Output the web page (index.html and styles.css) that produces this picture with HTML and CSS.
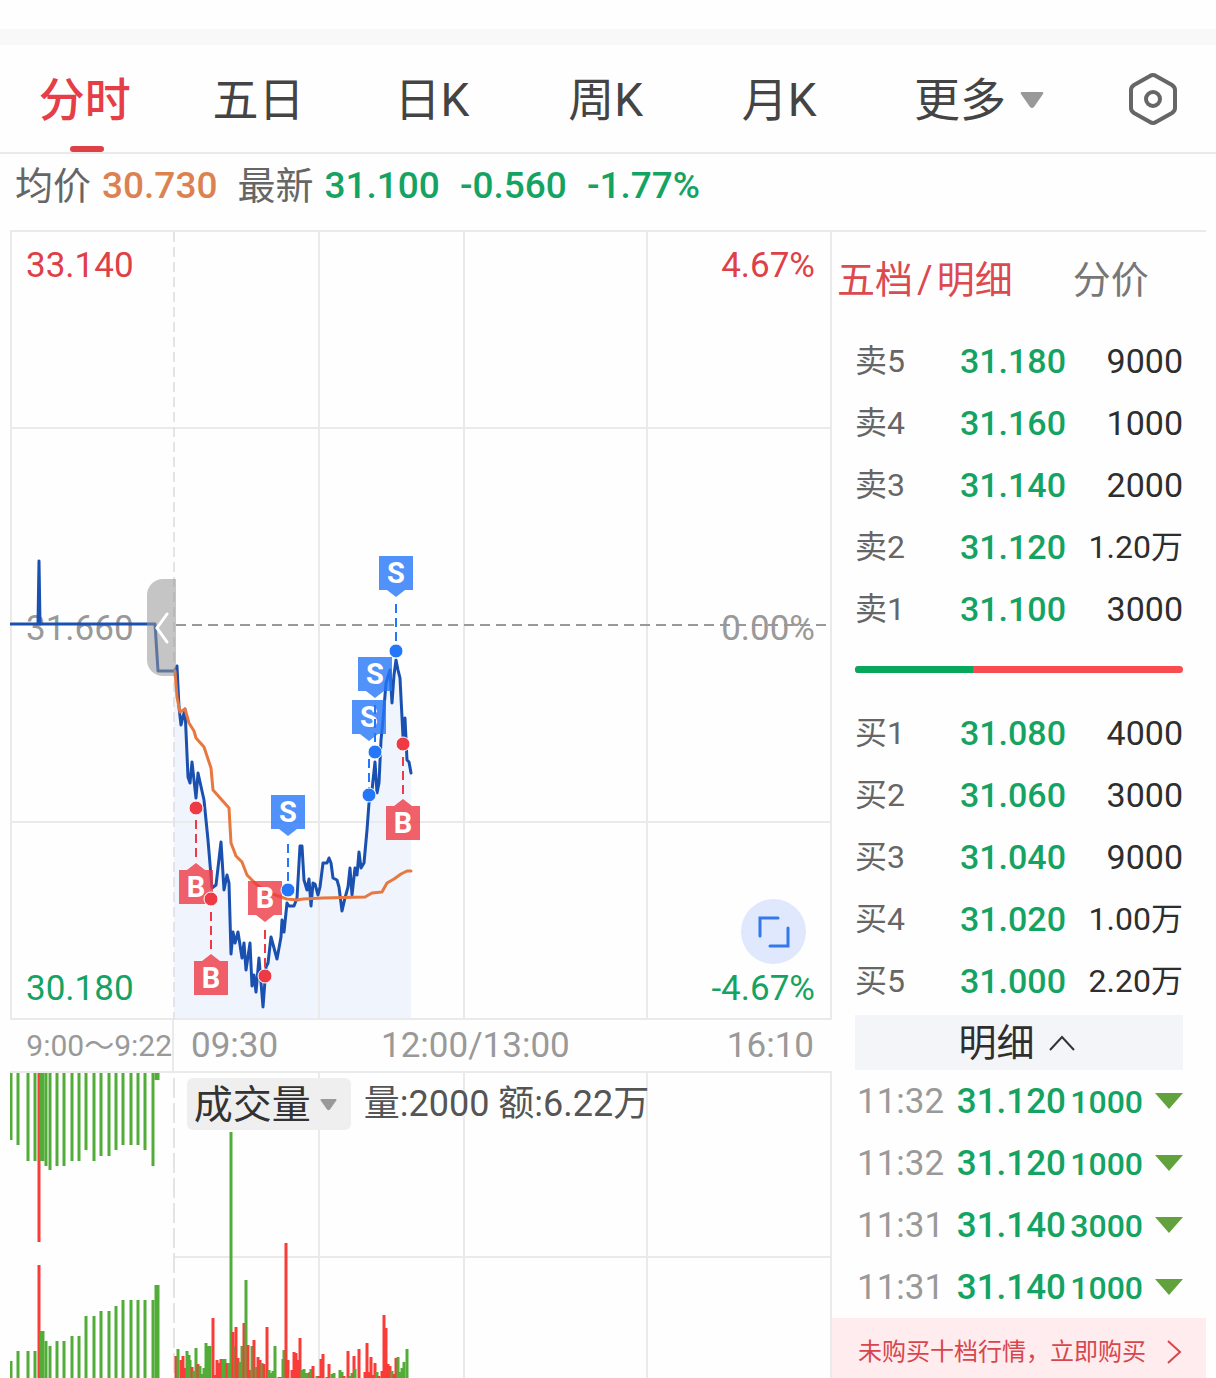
FILE: index.html
```html
<!DOCTYPE html>
<html lang="zh-CN">
	<head>
		<meta charset="UTF-8" />
		<meta name="viewport" content="width=device-width, initial-scale=1" />

		<title>分时</title>

		<link rel="stylesheet" href="styles.css">
	</head>
	<body>

		<nav class="tabs">
			<button class="tab active" type="button">分时</button>
			<button class="tab" type="button">五日</button>
			<button class="tab" type="button">日K</button>
			<button class="tab" type="button">周K</button>
			<button class="tab" type="button">月K</button>
			<button class="tab more" type="button">更多
				<svg class="caret" viewBox="0 0 24 16"><path d="M2 0H22Q24 0 23 2L14 15Q12 17 10 15L1 2Q0 0 2 0Z" /></svg>
			</button>
			<button class="tab settings" type="button" aria-label="设置">
				<svg class="gear" viewBox="0 0 50 54">
					<path d="M22 4Q25 2 28 4L44 13Q47 15 47 18V36Q47 39 44 41L28 50Q25 52 22 50L6 41Q3 39 3 36V18Q3 15 6 13Z" />
					<circle cx="25" cy="27" r="7" />
				</svg>
			</button>
		</nav>

		<p class="quote">
			<span class="name">均价</span><span class="avg">30.730</span>
			<span class="name last">最新</span><span class="down">31.100</span>
			<span class="down change">-0.560</span>
			<span class="down change">-1.77%</span>
		</p>

		<main class="main">

			<section class="charts">

				<div class="price">
					<span class="label top left up">33.140</span>
					<span class="label top right up">4.67%</span>
					<span class="label middle left">31.660</span>
					<span class="label middle right">0.00%</span>
					<span class="label bottom left down">30.180</span>
					<span class="label bottom right down">-4.67%</span>

					<svg class="plot" viewBox="10 230 822 790">
						<defs>
							<g id="sell">
								<path class="tag" d="M-17 -40H17V-6H9L0 1L-9 -6H-17Z" />
								<text class="letter" y="-13">S</text>
							</g>
							<g id="buy">
								<path class="tag" d="M-17 40H17V6H9L0 -1L-9 6H-17Z" />
								<text class="letter" y="33">B</text>
							</g>
							<g id="buy-above">
								<path class="tag" d="M-17 -40H17V-6H9L0 1L-9 -6H-17Z" />
								<text class="letter" y="-13">B</text>
							</g>
						</defs>

						<path class="area" d="M174 1018V671L177 666L179 707L181 725L185 709L188 777L190 783L192 762L196 798L198 773L204 800L208 840L212 888L216 885L221 842L224 890L227 875L229 883L231 954L233 932L235 943L238 932L242 958L244 943L246 970L250 943L252 986L254 975L256 992L259 958L263 1007L266 967L268 963L271 937L277 959L281 937L282 920L284 932L287 903L289 906L294 906L297 898L300 846L302 846L304 880L307 890L309 879L311 906L313 883L315 884L318 895L320 887L323 863L327 863L329 858L331 863L333 878L337 880L339 887L342 911L345 898L348 887L350 868L352 895L355 868L357 875L359 852L361 868L364 863L367 830L369 803L372 790L375 762L377 793L379 783L381 740L383 720L386 683L390 670L392 703L394 675L396 660L398 670L400 678L403 737L405 718L407 760L409 762L411 773V1018Z" />

						<path class="grid" d="M10 231H832M10 428H831M10 822H831M10 1019H832M11 231V1019M319 231V1019M464 231V1019M647 231V1019M831 231V1019" />
						<path class="grid dashed" d="M174 232V1020" />
						<path class="zero" d="M176 625H830" />

						<path class="line" d="M11 624H38L39 561L40 624H155L158 671H175L177 666L179 707L181 725L185 709L188 777L190 783L192 762L196 798L198 773L204 800L208 840L212 888L216 885L221 842L224 890L227 875L229 883L231 954L233 932L235 943L238 932L242 958L244 943L246 970L250 943L252 986L254 975L256 992L259 958L263 1007L266 967L268 963L271 937L277 959L281 937L282 920L284 932L287 903L289 906L294 906L297 898L300 846L302 846L304 880L307 890L309 879L311 906L313 883L315 884L318 895L320 887L323 863L327 863L329 858L331 863L333 878L337 880L339 887L342 911L345 898L348 887L350 868L352 895L355 868L357 875L359 852L361 868L364 863L367 830L369 803L372 790L375 762L377 793L379 783L381 740L383 720L386 683L390 670L392 703L394 675L396 660L398 670L400 678L403 737L405 718L407 760L409 762L411 773" />
						<path class="line average" d="M175 671L177 697L180 712L185 709L189 723L194 731L196 738L204 747L211 768L213 790L229 808L231 843L236 856L242 862L247 875L257 885L270 893L287 899L297 900L303 899L323 898L365 897L372 893L382 892L387 883L394 879L401 874L407 871L411 871" />

						<g class="marks buys">
							<path class="stem" d="M196 820V857M211 912V949M265 930V970M403 757V794" />
							<use href="#buy" x="196" y="864" />
							<use href="#buy" x="211" y="955" />
							<use href="#buy-above" x="265" y="921" />
							<use href="#buy" x="403" y="800" />
							<circle cx="196" cy="808" r="7" />
							<circle cx="211" cy="899" r="7" />
							<circle cx="265" cy="976" r="7" />
							<circle cx="403" cy="744" r="7" />
						</g>
						<g class="marks sells">
							<use href="#sell" x="288" y="835" />
							<use href="#sell" x="375" y="697" />
							<use href="#sell" x="369" y="740" />
							<use href="#sell" x="396" y="596" />
							<path class="stem" d="M288 844V884M369 759V790M375 705V746M396 604V646" />
							<circle cx="288" cy="890" r="7" />
							<circle cx="369" cy="795" r="7" />
							<circle cx="375" cy="752" r="7" />
							<circle cx="396" cy="651" r="7" />
						</g>
					</svg>

					<button class="handle" type="button" aria-label="收起盘前">
						<svg viewBox="0 0 14 32"><path d="M12 2L2 16L12 30" /></svg>
					</button>
					<button class="expand" type="button" aria-label="全屏">
						<svg viewBox="0 0 32 32"><path d="M2 20V2H20M30 12V30H12" /></svg>
					</button>
				</div>

				<div class="axis">
					<span class="pre">9:00～9:22</span>
					<span class="open">09:30</span>
					<span class="rest"><span>12:00/13:00</span><span>16:10</span></span>
				</div>

				<div class="volume">
					<svg class="plot" viewBox="10 1071 822 307">
						<path class="grid" d="M10 1072H832M174 1257H831M319 1072V1378M464 1072V1378M647 1072V1378M831 1072V1378" />
						<path class="grid dashed" d="M174 1078V1378" />
						<g id="bars"></g>
					</svg>
					<div class="legend">
						<button class="picker" type="button">成交量
							<svg class="caret" viewBox="0 0 24 16"><path d="M2 0H22Q24 0 23 2L14 15Q12 17 10 15L1 2Q0 0 2 0Z" /></svg>
						</button>
						<span>量:2000 额:6.22万</span>
					</div>
				</div>

			</section>

			<aside class="side">

				<div class="side-tabs">
					<button class="side-tab active" type="button">五档<i>/</i>明细</button>
					<button class="side-tab" type="button">分价</button>
				</div>

				<table class="book">
					<tr><th>卖5</th><td class="down">31.180</td><td>9000</td></tr>
					<tr><th>卖4</th><td class="down">31.160</td><td>1000</td></tr>
					<tr><th>卖3</th><td class="down">31.140</td><td>2000</td></tr>
					<tr><th>卖2</th><td class="down">31.120</td><td class="wan">1.20万</td></tr>
					<tr><th>卖1</th><td class="down">31.100</td><td>3000</td></tr>
				</table>

				<div class="ratio"><div class="ratio-bar"><div class="ratio-fill" style="width: 36%"></div></div></div>

				<table class="book">
					<tr><th>买1</th><td class="down">31.080</td><td>4000</td></tr>
					<tr><th>买2</th><td class="down">31.060</td><td>3000</td></tr>
					<tr><th>买3</th><td class="down">31.040</td><td>9000</td></tr>
					<tr><th>买4</th><td class="down">31.020</td><td class="wan">1.00万</td></tr>
					<tr><th>买5</th><td class="down">31.000</td><td class="wan">2.20万</td></tr>
				</table>

				<button class="detail" type="button">明细
					<svg viewBox="0 0 26 16"><path d="M1 15L13 2L25 15" /></svg>
				</button>

				<table class="trades">
					<tr><td>11:32</td><td>31.120</td><td>1000</td><td><svg viewBox="0 0 28 16"><path d="M0 0H28L14 16Z" /></svg></td></tr>
					<tr><td>11:32</td><td>31.120</td><td>1000</td><td><svg viewBox="0 0 28 16"><path d="M0 0H28L14 16Z" /></svg></td></tr>
					<tr><td>11:31</td><td>31.140</td><td>3000</td><td><svg viewBox="0 0 28 16"><path d="M0 0H28L14 16Z" /></svg></td></tr>
					<tr><td>11:31</td><td>31.140</td><td>1000</td><td><svg viewBox="0 0 28 16"><path d="M0 0H28L14 16Z" /></svg></td></tr>
				</table>

				<a class="banner" href="#">未购买十档行情，立即购买
					<svg viewBox="0 0 16 26"><path d="M2 2L14 13L2 24" /></svg>
				</a>

			</aside>

		</main>

		<script src="volume.js" type="text/javascript"></script>
	</body>
</html>
```
FILE: styles.css
```css
body {
	background: #FEFEFE;
	border-top: 16px solid #F8F8F8;
	color: #2E2E2E;
	font: 35px/40px Roboto, "Noto Sans CJK SC", sans-serif;
	margin: 29px 0 0;
}

html {
	background: #FEFEFE;
}

button {
	background: none;
	border: 0;
	color: inherit;
	font: inherit;
	margin: 0;
	padding: 0;
}

i {
	font-style: normal;
	margin: 0 4px;
}

svg {
	display: block;
	fill: none;
}

.up {
	color: #DF4048;
}

.down {
	color: #14A362;
}

.quote .down,
.book .down {
	font-weight: 500;
}

/* period tabs */

.tabs {
	border-bottom: 2px solid #EAEAEA;
	display: grid;
	grid-template-columns: repeat(5, 1fr) 222px 126px;
	height: 107px;
}

.tab {
	align-items: center;
	color: #444;
	display: flex;
	font-size: 46px;
	justify-content: center;
	padding: 3px 4px 0 0;
	position: relative;
}

.tab.active {
	color: #E63E46;
	font-weight: 500;
}

.tab.active::after {
	background: #DE4048;
	border-radius: 3px;
	bottom: 0;
	content: "";
	height: 6px;
	left: 50%;
	margin-left: -17px;
	position: absolute;
	width: 34px;
}

.tab.more {
	gap: 14px;
	padding-right: 0;
}

.tab.settings {
	padding: 0;
}

.caret {
	fill: #999;
	width: 24px;
}

.gear {
	stroke: #666;
	stroke-width: 4;
	width: 50px;
}

/* quote line */

.quote {
	display: flex;
	font-size: 37px;
	height: 76px;
	line-height: 64px;
	margin: 0;
	padding-left: 15px;
}

.name {
	color: #666;
	font-size: 38px;
	margin-right: 11px;
}

.last,
.change {
	margin-left: 20px;
}

.avg {
	color: #DB8250;
	font-weight: 500;
}

/* charts */

.main {
	display: grid;
	grid-template-columns: minmax(0, 822fr) minmax(0, 374fr);
	margin: 0 10px;
}

.price,
.volume {
	position: relative;
}

.plot {
	height: auto;
	position: relative;
	width: 100%;
}

.label {
	position: absolute;
}

.top {
	top: 16px;
}

.middle {
	color: #999;
	margin-top: -16px;
	top: 50%;
}

.bottom {
	bottom: 11px;
}

.left {
	left: 16px;
}

.right {
	right: 17px;
}

.grid {
	stroke: #EAEAEA;
	stroke-width: 2;
}

.dashed {
	stroke: #E2E4E8;
	stroke-dasharray: 20 5;
}

.price .dashed {
	stroke-dasharray: 10 5;
}

.zero {
	stroke: #999;
	stroke-dasharray: 10 6;
	stroke-width: 2;
}

.area {
	fill: #EFF4FD;
}

.line {
	stroke: #1A50B0;
	stroke-linecap: round;
	stroke-linejoin: round;
	stroke-width: 3;
}

.average {
	stroke: #E8783F;
}

.marks {
	fill: #EE3A45;
	stroke: #EE3A45;
}

.sells {
	fill: #2477F8;
	stroke: #2477F8;
}

.marks circle {
	stroke: #FFF;
	stroke-width: 1;
}

.stem {
	stroke-dasharray: 9 5;
	stroke-width: 2;
}

.tag {
	opacity: .8;
	stroke: none;
}

.letter {
	fill: #FFF;
	font-size: 29px;
	font-weight: 700;
	stroke: none;
	text-anchor: middle;
}

.handle {
	align-items: center;
	background: rgba(150, 150, 150, .55);
	border-radius: 16px 0 0 16px;
	display: flex;
	height: 97px;
	justify-content: center;
	margin-top: -46px;
	position: absolute;
	left: 137px;
	top: 50%;
	width: 29px;
}

.handle svg {
	stroke: #FFF;
	stroke-linecap: round;
	stroke-width: 3;
	width: 14px;
}

.expand {
	align-items: center;
	background: #DFE8FC;
	border-radius: 50%;
	bottom: 56px;
	display: flex;
	height: 65px;
	justify-content: center;
	position: absolute;
	right: 26px;
	width: 65px;
}

.expand svg {
	stroke: #3478EA;
	stroke-linecap: round;
	stroke-width: 3;
	width: 32px;
}

.axis {
	color: #999;
	display: grid;
	grid-template-columns: 164fr 207fr 451fr;
	line-height: 51px;
}

.pre {
	border-right: 2px solid #EAEAEA;
	font-size: 30px;
	text-align: right;
}

.open {
	padding-left: 17px;
}

.rest {
	display: flex;
	justify-content: space-between;
	padding-right: 18px;
}

.legend {
	align-items: center;
	color: #555;
	display: flex;
	font-size: 36px;
	gap: 13px;
	left: 21.5%;
	position: absolute;
	top: 7px;
}

.picker {
	align-items: center;
	background: #EFEFEF;
	border-radius: 6px;
	color: #333;
	display: flex;
	font-size: 39px;
	gap: 9px;
	height: 52px;
	padding: 2px 14px 0 7px;
}

.picker .caret {
	width: 17px;
}

.bar {
	stroke: #FA3C38;
	stroke-width: 3;
}

.bar.sell {
	stroke: #52AC38;
}

/* order book */

.side {
	border-top: 2px solid #EAEAEA;
	padding: 0 23px;
}

.side-tabs {
	display: flex;
	gap: 60px;
	height: 97px;
	margin-left: -18px;
}

.side-tab {
	color: #777;
	font-size: 38px;
	height: 96px;
	white-space: nowrap;
}

.side-tab.active {
	color: #DC4A50;
}

table {
	border-collapse: collapse;
	table-layout: fixed;
	width: 100%;
}

td,
th {
	box-sizing: border-box;
	height: 62px;
	padding: 2px 0 0;
	text-align: right;
	white-space: nowrap;
}

.book td {
	font-size: 34px;
}

.book th {
	color: #666;
	font-size: 32px;
	font-weight: 400;
	text-align: left;
	width: 90px;
}

.book td:nth-child(2) {
	width: 121px;
}

.book .wan {
	font-size: 32px;
}

.ratio {
	align-items: center;
	display: flex;
	height: 61px;
	padding-bottom: 1px;
}

.ratio-bar {
	background: #F84C50;
	border-radius: 4px;
	height: 7px;
	overflow: hidden;
	width: 100%;
}

.ratio-fill {
	background: #08A85C;
	height: 7px;
}

.detail {
	align-items: center;
	background: #F4F5F9;
	display: flex;
	font-size: 38px;
	gap: 14px;
	height: 55px;
	justify-content: center;
	margin-top: 4px;
	padding-right: 5px;
	width: 100%;
}

.detail svg {
	stroke: #333;
	stroke-width: 2;
	width: 26px;
}

.trades td {
	color: #14A362;
	font-size: 32px;
	font-weight: 500;
	width: 77px;
}

.trades td:first-child {
	color: #999;
	font-size: 35px;
	font-weight: 400;
	padding-left: 2px;
	text-align: left;
	width: 90px;
}

.trades td:nth-child(2) {
	font-size: 35px;
	width: 121px;
}

.trades td:last-child {
	padding: 0;
	width: 40px;
}

.trades svg {
	fill: #62A23C;
	margin-left: auto;
	width: 28px;
}

.banner {
	align-items: center;
	background: #FEECEE;
	box-sizing: border-box;
	color: #D9454C;
	display: flex;
	font-size: 24px;
	height: 60px;
	justify-content: space-between;
	line-height: 60px;
	margin: 0 -23px;
	padding: 8px 24px 0 26px;
	text-decoration: none;
	white-space: nowrap;
}

.banner svg {
	stroke: #D9454C;
	stroke-width: 2;
	width: 16px;
}
```
FILE: volume.js
```javascript
var BASE = 1378;
var group = document.getElementById('bars');

var bar = function(x, from, to, sell){
	var path = document.createElementNS('http://www.w3.org/2000/svg', 'path');
	path.setAttribute('class', sell ? 'bar sell' : 'bar');
	path.setAttribute('d', 'M' + x + ' ' + from + 'V' + to);
	group.appendChild(path);
};

// before the open: x, end of the hanging bar, top of the standing bar
var pre = [
	[11, 1140, 1361], [18, 1145, 1351], [28, 1161, 1351], [35, 1161, 1351],
	[41, 1161, 1331], [43, 1161, 1331], [46, 1166, 1341], [50, 1170, 1346],
	[57, 1166, 1341], [64, 1166, 1341], [72, 1161, 1336], [79, 1161, 1336],
	[86, 1150, 1316], [94, 1161, 1316], [101, 1156, 1311], [109, 1156, 1311],
	[116, 1150, 1306], [123, 1145, 1300], [131, 1145, 1300], [138, 1145, 1300],
	[145, 1150, 1300], [153, 1166, 1300], [156, 1080, 1285], [158, 1080, 1285]
];

bar(39, 1073, 1242, false);
bar(39, 1265, BASE, false);
pre.forEach(function(item){
	bar(item[0], 1073, item[1], true);
	bar(item[0], item[2], BASE, true);
});

// session: x, height, side
var session = '176 22 r,178 29 g,181 18 r,183 22 r,185 10 r,187 27 g,189 23 g,190 18 g,192 11 r,194 7 g,' +
	'196 30 g,198 14 r,200 12 g,202 4 g,204 10 g,206 35 g,208 32 g,210 32 g,213 60 r,215 3 r,217 18 r,' +
	'219 15 r,221 19 r,223 19 g,225 19 g,227 15 r,229 15 g,231 246 g,233 46 r,235 32 g,236 51 r,238 20 r,' +
	'240 16 g,242 32 g,244 55 r,246 98 g,248 33 r,250 8 r,252 32 g,254 38 r,256 11 g,258 21 r,260 18 r,' +
	'262 15 g,264 14 r,267 51 r,269 8 g,271 5 g,273 7 g,275 32 g,279 1 r,281 1 r,283 19 g,284 28 g,' +
	'286 135 r,288 18 r,292 8 r,294 26 r,296 25 r,298 18 r,300 40 r,302 8 g,304 9 g,306 5 g,308 5 g,' +
	'310 6 r,311 9 g,313 12 r,317 2 g,319 2 r,321 19 r,323 24 r,327 1 r,329 14 r,332 4 g,334 5 g,340 8 g,' +
	'342 6 g,344 2 r,348 27 r,350 2 g,352 5 g,354 22 r,355 9 g,359 29 r,365 6 r,367 35 r,369 6 r,371 21 r,' +
	'373 3 r,375 15 r,377 6 g,379 2 r,382 7 r,384 63 r,386 50 r,388 14 r,390 12 r,392 7 g,394 4 r,396 20 r,' +
	'398 21 g,400 6 g,402 10 g,404 16 g,407 29 g';

session.split(',').forEach(function(item){
	var parts = item.split(' ');
	bar(parts[0], BASE - parts[1], BASE, parts[2] == 'g');
});
```
